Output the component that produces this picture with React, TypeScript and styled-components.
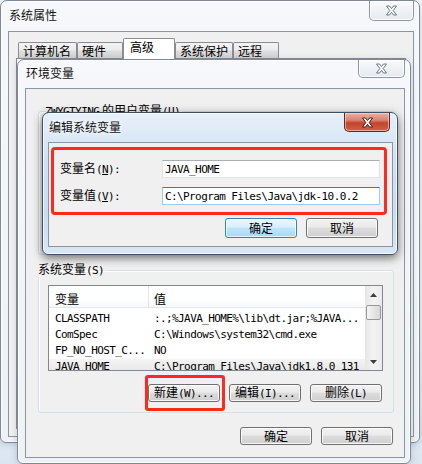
import React from 'react'
import styled, { createGlobalStyle, css } from 'styled-components'

const CJK = `'Noto Sans CJK SC', 'Noto Sans', sans-serif`
const MONO = `'DejaVu Sans Mono', 'Liberation Mono', 'Noto Sans CJK SC', monospace`

const GlobalStyle = createGlobalStyle`
  html, body {
    margin: 0;
    padding: 0;
    background: #f3f6fa;
  }
`

const Desktop = styled.div`
  position: relative;
  width: 422px;
  height: 464px;
  overflow: hidden;
  font-family: ${CJK};
  font-size: 12px;
  color: #000;
  background: linear-gradient(180deg, #f6f8fb 0%, #eef2f7 70%, #dbe5f0 100%);
`

interface WindowProps {
  $x: number
  $y: number
  $w: number
  $h: number
  $pl: number
  $pr: number
  $pb: number
  $active?: boolean
}

// windows sit on a free desktop, so they are placed by coordinates
const Window = styled.div<WindowProps>`
  position: absolute;
  left: ${p => p.$x}px;
  top: ${p => p.$y}px;
  width: ${p => p.$w}px;
  height: ${p => p.$h}px;
  box-sizing: border-box;
  display: flex;
  flex-direction: column;
  padding: 0 ${p => p.$pr}px ${p => p.$pb}px ${p => p.$pl}px;
  border-radius: 7px 7px 6px 6px;
  ${p =>
    p.$active
      ? css`
          border: 1px solid #3f4f63;
          background: linear-gradient(180deg, #e7f0fa 0%, #d2e2f4 30%, #cadcf1 70%, #d8e6f6 100%);
          box-shadow: inset 0 0 0 1px rgba(255, 255, 255, 0.75), 0 3px 10px rgba(0, 0, 0, 0.55);
        `
      : css`
          border: 1px solid #7f8894;
          background: linear-gradient(180deg, #f6f8fb 0%, #eef1f5 100%);
          box-shadow: inset 0 0 0 1px rgba(255, 255, 255, 0.85), 0 1px 6px rgba(60, 90, 130, 0.25);
        `}
`

const TitleBar = styled.div<{ $h: number }>`
  flex: none;
  height: ${p => p.$h}px;
  display: flex;
  align-items: flex-start;
`

const Title = styled.span<{ $top: number }>`
  margin: ${p => p.$top}px 0 0 1px;
  font-size: 12px;
  line-height: 14px;
  color: #111;
  text-shadow: 0 0 4px #fff, 0 0 8px #fff;
`

const CloseButton = styled.div<{ $w: number; $h: number; $mr: number; $active?: boolean }>`
  margin-left: auto;
  margin-right: ${p => p.$mr}px;
  width: ${p => p.$w}px;
  height: ${p => p.$h}px;
  box-sizing: border-box;
  display: flex;
  align-items: center;
  justify-content: center;
  border-radius: 0 0 5px 5px;
  border-top: none;
  ${p =>
    p.$active
      ? css`
          border: 1px solid #5b2a22;
          border-top: none;
          background: linear-gradient(180deg, #eab3a6 0%, #d9826f 40%, #c5432c 55%, #cf6247 100%);
          box-shadow: inset 0 0 0 1px rgba(255, 220, 210, 0.6);
        `
      : css`
          border: 1px solid #8d97a4;
          border-top: none;
          background: linear-gradient(180deg, #fafbfc 0%, #eef1f5 50%, #e6eaf0 100%);
          box-shadow: inset 0 0 0 1px rgba(255, 255, 255, 0.8);
        `}
`

const CloseGlyph = ({ active }: { active?: boolean }) => (
  <svg width="13" height="11" viewBox="0 0 13 11">
    <polygon
      points="1.5,1 4.5,1 6.5,3.6 8.5,1 11.5,1 8.2,5.5 11.5,10 8.5,10 6.5,7.4 4.5,10 1.5,10 4.8,5.5"
      fill="#fff"
      stroke={active ? '#4a1a12' : '#6b7582'}
      strokeWidth="1"
      strokeLinejoin="round"
    />
  </svg>
)

const Client = styled.div<{ $pad?: string }>`
  flex: 1;
  min-height: 0;
  display: flex;
  flex-direction: column;
  box-sizing: border-box;
  padding: ${p => p.$pad ?? '0'};
  border: 1px solid #8a96a5;
  background: #f0f0f0;
`

const TabStrip = styled.div`
  flex: none;
  height: 20px;
  display: flex;
  align-items: flex-end;
  padding-left: 2px;
`

const Tab = styled.div<{ $w: number; $selected?: boolean }>`
  position: relative;
  box-sizing: border-box;
  width: ${p => p.$w}px;
  height: ${p => (p.$selected ? 21 : 16)}px;
  margin-bottom: ${p => (p.$selected ? -1 : 0)}px;
  z-index: ${p => (p.$selected ? 1 : 0)};
  padding: 1px 0 0 ${p => (p.$selected ? 6 : 4)}px;
  border: 1px solid #898c95;
  border-bottom: none;
  border-radius: 2px 2px 0 0;
  line-height: 14px;
  white-space: nowrap;
  background: ${p =>
    p.$selected ? '#fff' : 'linear-gradient(180deg, #f4f4f4 0%, #ececec 45%, #dedede 55%, #d2d2d2 100%)'};
`

const TabPanel = styled.div`
  flex: 1;
  border: 1px solid #898c95;
  background: #fff;
`

const GroupBox = styled.fieldset<{ $h: number; $mt?: number }>`
  box-sizing: border-box;
  height: ${p => p.$h}px;
  min-width: 0;
  margin: ${p => p.$mt ?? 0}px 0 0 0;
  padding: 7px 10px 0 9px;
  border: 1px solid #d5dfe5;
  border-radius: 3px;
  box-shadow: inset 1px 1px 0 #fff;
  display: flex;
  flex-direction: column;
`

const Legend = styled.legend<{ $indent: number }>`
  margin-left: ${p => p.$indent}px;
  padding: 0 2px 0 0;
  font-size: 12px;
  line-height: 14px;
  white-space: nowrap;
`

const Latin = styled.span`
  font-family: ${MONO};
  font-size: 11px;
  letter-spacing: -0.6px;
`

const Key = styled.span`
  text-decoration: underline;
`

const ListView = styled.div`
  flex: none;
  height: 86px;
  box-sizing: border-box;
  border: 1px solid #828790;
  background: #fff;
  display: flex;
  overflow: hidden;
`

const ListMain = styled.div`
  flex: 1;
  min-width: 0;
  display: flex;
  flex-direction: column;
`

const HeaderRow = styled.div`
  flex: none;
  height: 21px;
  display: grid;
  grid-template-columns: 99px 1fr;
  border-bottom: 1px solid #e5e5e5;
  background: linear-gradient(180deg, #ffffff 0%, #ffffff 60%, #f7f8fa 100%);
`

const HeaderCell = styled.div`
  padding: 6px 0 0 6px;
  line-height: 14px;
  & + & {
    border-left: 1px solid #e5e5e5;
    padding-left: 5px;
  }
`

const Rows = styled.div`
  padding-top: 3px;
`

const Row = styled.div<{ $selected?: boolean }>`
  height: 16px;
  display: grid;
  grid-template-columns: 99px 1fr;
  line-height: 16px;
  font-family: ${MONO};
  font-size: 11px;
  letter-spacing: -0.6px;
  white-space: nowrap;
  background: ${p => (p.$selected ? 'linear-gradient(180deg, #f4f4f4, #e4e4e4)' : 'transparent')};
`

const Cell = styled.div`
  overflow: hidden;
  padding-left: 6px;
  & + & {
    padding-left: 6px;
  }
`

const ScrollBar = styled.div`
  flex: none;
  width: 17px;
  display: flex;
  flex-direction: column;
  background: linear-gradient(90deg, #e6e6e6 0%, #f3f3f3 50%, #ebebeb 100%);
`

const ScrollArrow = styled.div`
  flex: none;
  height: 17px;
  display: flex;
  align-items: center;
  justify-content: center;
`

const ScrollThumb = styled.div`
  flex: none;
  height: 15px;
  margin: 2px 1px 0 1px;
  box-sizing: border-box;
  border: 1px solid #979797;
  border-radius: 2px;
  background: linear-gradient(90deg, #f5f5f5 0%, #e6e6e6 50%, #d8d8d8 100%);
`

const ScrollTrack = styled.div`
  flex: 1;
`

const Arrow = ({ down }: { down?: boolean }) => (
  <svg width="7" height="4" viewBox="0 0 7 4">
    <polygon points={down ? '0,0 7,0 3.5,4' : '0,4 7,4 3.5,0'} fill="#3d3d3d" />
  </svg>
)

const ButtonRow = styled.div<{ $mt: number; $pr: number }>`
  flex: none;
  display: flex;
  justify-content: flex-end;
  gap: 9px;
  margin-top: ${p => p.$mt}px;
  padding-right: ${p => p.$pr}px;
`

const Button = styled.button<{ $default?: boolean; $h: number }>`
  width: 72px;
  height: ${p => p.$h}px;
  box-sizing: border-box;
  margin: 0;
  padding: 0;
  font-family: ${CJK};
  font-size: 12px;
  line-height: 14px;
  color: #000;
  border-radius: 3px;
  white-space: nowrap;
  ${p =>
    p.$default
      ? css`
          border: 1px solid #3c7fb1;
          background: linear-gradient(180deg, #eaf6fd 0%, #d9f0fc 45%, #bee6fd 50%, #a7d9f5 100%);
          box-shadow: inset 0 0 0 1px rgba(255, 255, 255, 0.7);
        `
      : css`
          border: 1px solid #707070;
          background: linear-gradient(180deg, #f2f2f2 0%, #ebebeb 45%, #dddddd 50%, #cfcfcf 100%);
          box-shadow: inset 0 0 0 1px rgba(255, 255, 255, 0.8);
        `}
`

// red annotation drawn over a button
const Marked = styled.span`
  position: relative;
  display: inline-flex;
  &::after {
    content: '';
    position: absolute;
    left: -3px;
    right: -5px;
    top: -9px;
    bottom: -9px;
    border: 3px solid #ff2a1d;
    border-radius: 3px;
    pointer-events: none;
  }
`

const MarkedArea = styled.div`
  flex: none;
  width: 336px;
  height: 68px;
  box-sizing: border-box;
  border: 3px solid #ff2a1d;
  border-radius: 4px;
  padding: 10px 0 0 6px;
  display: flex;
  flex-direction: column;
  gap: 9px;
`

const FieldRow = styled.div`
  display: flex;
  align-items: center;
  height: 18px;
`

const FieldLabel = styled.label`
  width: 102px;
  flex: none;
  line-height: 14px;
`

const TextBox = styled.input<{ $focused?: boolean }>`
  width: 218px;
  height: 18px;
  box-sizing: border-box;
  margin: 0;
  padding: 0 0 0 2px;
  font-family: ${MONO};
  font-size: 11px;
  letter-spacing: -0.6px;
  color: #000;
  background: #fff;
  outline: none;
  border: 1px solid ${p => (p.$focused ? '#a4c9e3' : '#e2e3ea')};
  border-top-color: ${p => (p.$focused ? '#3d7bad' : '#abadb3')};
`

const userRows = [
  ['CLASSPATH', ':.;%JAVA_HOME%\\lib\\dt.jar;%JAVA...'],
  ['ComSpec', 'C:\\Windows\\system32\\cmd.exe'],
  ['FP_NO_HOST_C...', 'NO'],
  ['JAVA_HOME', 'C:\\Program Files\\Java\\jdk1.8.0_131'],
]

export default function App() {
  return (
    <Desktop>
      <GlobalStyle />

      <Window $x={0} $y={0} $w={420} $h={443} $pl={7} $pr={5} $pb={5}>
        <TitleBar $h={30}>
          <Title $top={7}>系统属性</Title>
          <CloseButton $w={45} $h={20} $mr={0}>
            <CloseGlyph />
          </CloseButton>
        </TitleBar>
        <Client $pad="6px 7px 7px 7px">
          <TabStrip>
            <Tab $w={59}>计算机名</Tab>
            <Tab $w={46}>硬件</Tab>
            <Tab $w={52} $selected>
              高级
            </Tab>
            <Tab $w={58}>系统保护</Tab>
            <Tab $w={46}>远程</Tab>
          </TabStrip>
          <TabPanel />
        </Client>
      </Window>

      <Window $x={17} $y={59} $w={394} $h={405} $pl={7} $pr={5} $pb={5}>
        <TitleBar $h={28}>
          <Title $top={6}>环境变量</Title>
          <CloseButton $w={47} $h={18} $mr={0}>
            <CloseGlyph />
          </CloseButton>
        </TitleBar>
        <Client $pad="14px 10px 0 12px">
          <GroupBox $h={152}>
            <Legend $indent={-3}>
              <Latin>ZWYGTYING</Latin> 的用户变量<Latin>(U)</Latin>
            </Legend>
          </GroupBox>
          <GroupBox $h={151} $mt={7}>
            <Legend $indent={-10}>
              系统变量<Latin>(S)</Latin>
            </Legend>
            <ListView>
              <ListMain>
                <HeaderRow>
                  <HeaderCell>变量</HeaderCell>
                  <HeaderCell>值</HeaderCell>
                </HeaderRow>
                <Rows>
                  {userRows.map(([name, value], i) => (
                    <Row key={name} $selected={i === 3}>
                      <Cell>{name}</Cell>
                      <Cell>{value}</Cell>
                    </Row>
                  ))}
                </Rows>
              </ListMain>
              <ScrollBar>
                <ScrollArrow>
                  <Arrow />
                </ScrollArrow>
                <ScrollThumb />
                <ScrollTrack />
                <ScrollArrow>
                  <Arrow down />
                </ScrollArrow>
              </ScrollBar>
            </ListView>
            <ButtonRow $mt={13} $pr={1}>
              <Marked>
                <Button $h={18}>
                  新建<Latin>(W)...</Latin>
                </Button>
              </Marked>
              <Button $h={18}>
                编辑<Latin>(I)...</Latin>
              </Button>
              <Button $h={18}>
                删除<Latin>(L)</Latin>
              </Button>
            </ButtonRow>
          </GroupBox>
          <ButtonRow $mt={14} $pr={1}>
            <Button $h={18}>确定</Button>
            <Button $h={18}>取消</Button>
          </ButtonRow>
        </Client>
      </Window>

      <Window $x={42} $y={112} $w={356} $h={143} $pl={5} $pr={4} $pb={7} $active>
        <TitleBar $h={29}>
          <Title $top={7}>编辑系统变量</Title>
          <CloseButton $w={46} $h={19} $mr={3} $active>
            <CloseGlyph active />
          </CloseButton>
        </TitleBar>
        <Client $pad="4px 0 0 2px">
          <MarkedArea>
            <FieldRow>
              <FieldLabel>
                变量名
                <Latin>
                  (<Key>N</Key>):
                </Latin>
              </FieldLabel>
              <TextBox readOnly defaultValue="JAVA_HOME" />
            </FieldRow>
            <FieldRow>
              <FieldLabel>
                变量值
                <Latin>
                  (<Key>V</Key>):
                </Latin>
              </FieldLabel>
              <TextBox $focused readOnly defaultValue="C:\Program Files\Java\jdk-10.0.2" />
            </FieldRow>
          </MarkedArea>
          <ButtonRow $mt={3} $pr={14}>
            <Button $h={20} $default>
              确定
            </Button>
            <Button $h={20}>取消</Button>
          </ButtonRow>
        </Client>
      </Window>
    </Desktop>
  )
}
